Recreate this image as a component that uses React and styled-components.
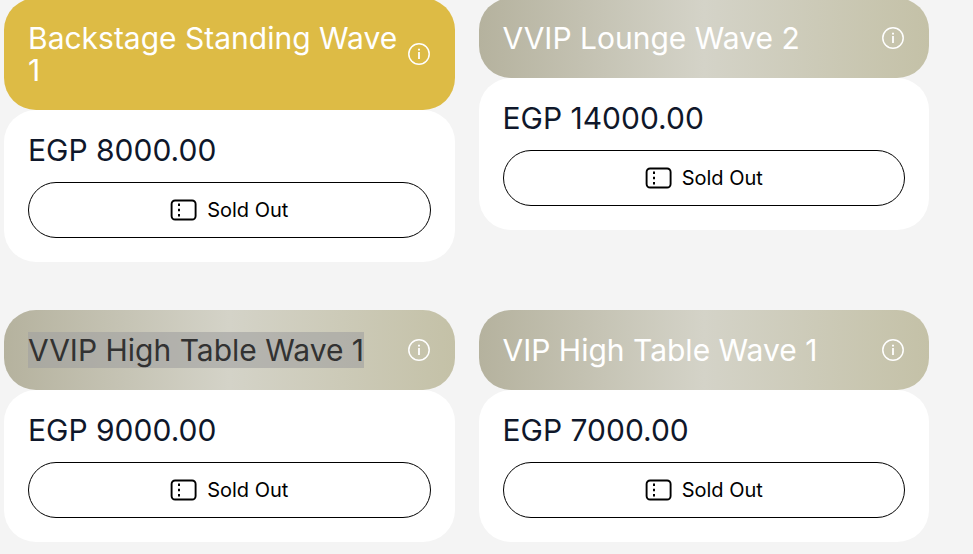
import React from "react";
import styled, { createGlobalStyle } from "styled-components";

const GlobalStyle = createGlobalStyle`
  * {
    box-sizing: border-box;
  }
  body {
    margin: 0;
    background: #f4f4f4;
    font-family: Inter, "Liberation Sans", sans-serif;
  }
  h2,
  p {
    margin: 0;
    font-weight: 400;
  }
`;
const Grid = styled.main`
  display: grid;
  grid-template-columns: repeat(2, minmax(0, 1fr));
  align-items: start;
  column-gap: 24px;
  row-gap: 48px;
  margin-top: -2px;
  padding: 0 44px 12px 4px;
`;
const Header = styled.header`
  display: flex;
  align-items: center;
  justify-content: space-between;
  padding: 24px;
  border-radius: 32px;
  color: #fff;
  background: ${(props) =>
    props.$tone === "gold"
      ? "#ddbb45"
      : "linear-gradient(90deg, #b5b29e 0%, #d4d3c8 50%, #c4c1a7 100%)"};
`;
const Title = styled.h2`
  font-size: 30px;
  line-height: 32px;
`;
const Highlight = styled.mark`
  color: #323232;
  background: rgba(160, 160, 160, 0.6);
`;
const InfoButton = styled.button`
  flex: none;
  display: flex;
  padding: 0;
  border: none;
  background: none;
  color: inherit;
  cursor: pointer;
`;
const Body = styled.div`
  display: flex;
  flex-direction: column;
  gap: 16px;
  padding: 24px;
  border-radius: 32px;
  background: #fff;
`;
const Price = styled.p`
  font-size: 30px;
  line-height: 32px;
  color: #0f172a;
`;
const SoldOutButton = styled.button`
  display: flex;
  align-items: center;
  justify-content: center;
  gap: 10px;
  height: 56px;
  border: 1px solid #000;
  border-radius: 28px;
  background: #fff;
  color: #000;
  font-family: inherit;
  font-size: 20px;
  line-height: 28px;
`;

const tickets = [
  { name: "Backstage Standing Wave 1", price: "8000.00", tone: "gold" },
  { name: "VVIP Lounge Wave 2", price: "14000.00", tone: "silver" },
  {
    name: "VVIP High Table Wave 1",
    price: "9000.00",
    tone: "silver",
    highlighted: true,
  },
  { name: "VIP High Table Wave 1", price: "7000.00", tone: "silver" },
];

const InfoIcon = () => (
  <svg width="24" height="24" viewBox="0 0 24 24" fill="none" aria-hidden="true">
    <circle cx="12" cy="12" r="10.2" stroke="currentColor" strokeWidth="1.5" />
    <path d="M12 10v7" stroke="currentColor" strokeWidth="1.8" />
    <path d="M12 6.8v1.8" stroke="currentColor" strokeWidth="2" />
  </svg>
);

const TicketIcon = () => (
  <svg width="27" height="22" viewBox="0 0 27 22" fill="none" aria-hidden="true">
    <rect
      x="1.6"
      y="1.5"
      width="24"
      height="19"
      rx="3.5"
      stroke="currentColor"
      strokeWidth="1.9"
    />
    <path
      d="M9 4.5v2.6M9 9.7v2.6M9 14.9v2.6"
      stroke="currentColor"
      strokeWidth="2"
    />
  </svg>
);

function TicketCard({ ticket }) {
  return (
    <article>
      <Header $tone={ticket.tone}>
        <Title>
          {ticket.highlighted ? (
            <Highlight>{ticket.name}</Highlight>
          ) : (
            ticket.name
          )}
        </Title>
        <InfoButton type="button" aria-label={`About ${ticket.name}`}>
          <InfoIcon />
        </InfoButton>
      </Header>
      <Body>
        <Price>EGP {ticket.price}</Price>
        <SoldOutButton type="button">
          <TicketIcon />
          Sold Out
        </SoldOutButton>
      </Body>
    </article>
  );
}

export default function App() {
  return (
    <>
      <GlobalStyle />
      <Grid>
        {tickets.map((ticket) => (
          <TicketCard key={ticket.name} ticket={ticket} />
        ))}
      </Grid>
    </>
  );
}
